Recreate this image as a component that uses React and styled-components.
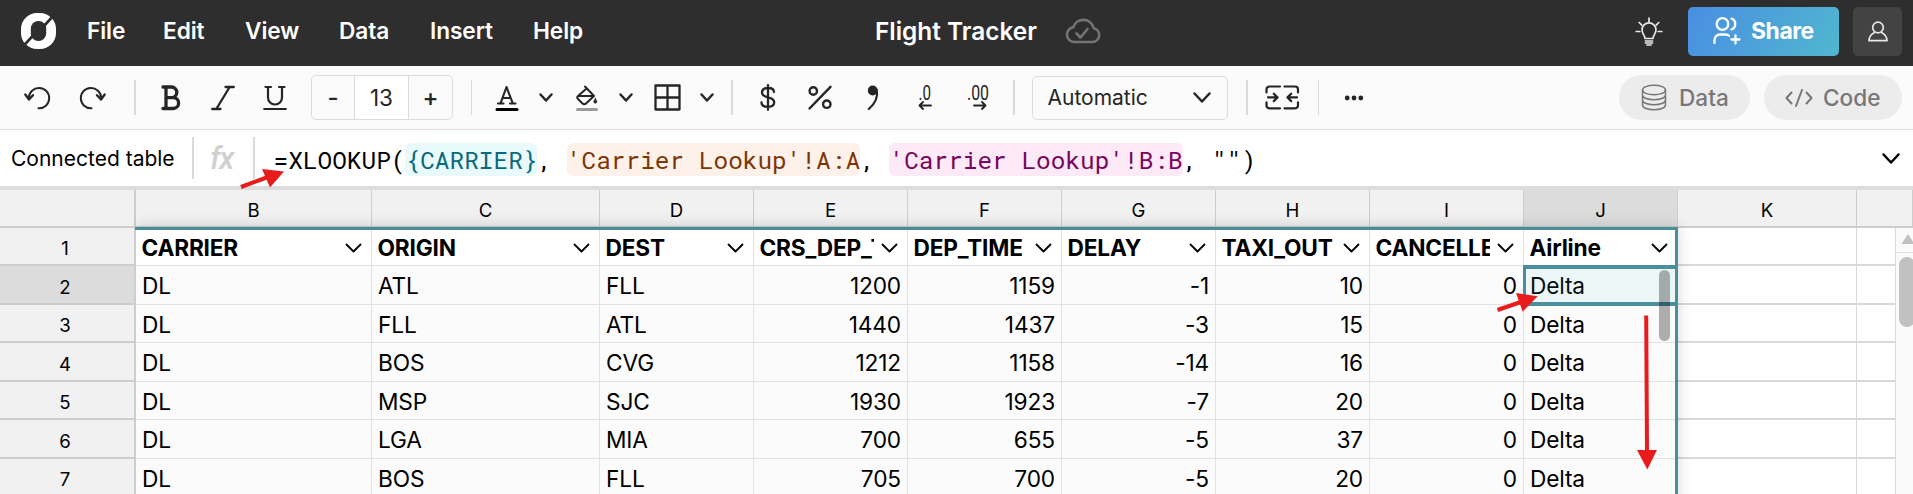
import React, { Fragment, useState } from 'react'
import styled, { createGlobalStyle, css } from 'styled-components'

const GlobalStyle = createGlobalStyle`
  * {
    box-sizing: border-box;
  }
  body {
    margin: 0;
    overflow: hidden;
    background: #fff;
    font-family: Inter, 'Liberation Sans', sans-serif;
  }
  button {
    font: inherit;
    color: inherit;
    border: 0;
    padding: 0;
    background: none;
    cursor: pointer;
  }
`

const teal = '#488f9b'

const Page = styled.div`
  position: relative;
  display: flex;
  flex-direction: column;
  width: 1913px;
  height: 494px;
  overflow: hidden;
`

/* Top bar */
const TopBar = styled.header`
  display: grid;
  grid-template-columns: 875px 1fr auto;
  align-items: center;
  height: 66px;
  flex: none;
  padding-right: 11px;
  background: #2e2e2e;
  color: #fff;
`

const MenuBar = styled.nav`
  display: flex;
  align-items: center;
  padding-left: 20px;
`

const MenuItem = styled.button`
  width: ${({ $width }) => $width}px;
  height: 30px;
  margin-top: -5px;
  text-align: left;
  font-size: 22.7px;
  font-weight: 600;
  letter-spacing: -0.1px;
  white-space: nowrap;
`

const LogoLink = styled.a`
  display: flex;
  width: 67px;
  margin-top: -4px;
`

const FileTitle = styled.div`
  display: flex;
  align-items: center;
  gap: 28px;
  margin-top: -4px;
  font-size: 24.4px;
  font-weight: 600;
`

const Account = styled.div`
  display: flex;
  align-items: center;
  height: 49px;
  margin-top: -3px;
`

const TipsButton = styled.button`
  display: flex;
  margin-right: 25px;
`

const ShareButton = styled.button`
  display: flex;
  align-items: center;
  gap: 10px;
  width: 151px;
  height: 49px;
  padding-left: 25px;
  padding-bottom: 1px;
  margin-right: 14px;
  border-radius: 5px;
  background: linear-gradient(120deg, #4a90e2 5%, #50b5cf 95%);
  font-size: 23px;
  font-weight: 700;
  letter-spacing: -0.5px;
`

const UserButton = styled.button`
  display: flex;
  align-items: center;
  justify-content: center;
  width: 49px;
  height: 49px;
  border-radius: 5px;
  background: #434343;
`

/* Toolbar */
const ToolBar = styled.div`
  display: flex;
  align-items: center;
  height: 64px;
  flex: none;
  padding: 0 11px 0 11.5px;
  border-bottom: 1px solid #dcdcdc;
  background: #fbfbfb;
  color: #252525;
`

const Tool = styled.button`
  display: flex;
  align-items: center;
  justify-content: center;
  flex: none;
  width: ${({ $width = 52 }) => $width}px;
  height: 44px;
`

const Divider = styled.i`
  flex: none;
  width: ${({ $thin }) => ($thin ? 1 : 2)}px;
  height: ${({ $tall }) => ($tall ? 42 : 35)}px;
  margin: 0 ${({ $right = 9 }) => $right}px 0 ${({ $left = 9 }) => $left}px;
  background: #dadada;
`

const Stepper = styled.div`
  display: grid;
  grid-template-columns: 42px 55px 1fr;
  flex: none;
  width: 142px;
  height: 45px;
  margin-left: 9.5px;
  border: 1px solid #dcdcdc;
  border-radius: 5px;
  font-size: 22.5px;
  text-align: center;
`

const StepButton = styled.button`
  font-size: 24px;
  font-weight: 500;
`

const StepValue = styled.span`
  border: solid #dcdcdc;
  border-width: 0 1px;
  background: #fff;
  line-height: 43px;
`

const FormatSelect = styled.button`
  display: flex;
  align-items: center;
  justify-content: space-between;
  flex: none;
  width: 196px;
  height: 44px;
  padding: 0 16px 0 15px;
  border: 1px solid #dcdcdc;
  border-radius: 5px;
  font-size: 21px;
`

const Pills = styled.div`
  display: flex;
  gap: 14px;
  margin-left: auto;
`

const Pill = styled.button`
  display: flex;
  align-items: center;
  width: ${({ $width }) => $width}px;
  height: 45px;
  padding-left: ${({ $pad }) => $pad}px;
  gap: ${({ $gap }) => $gap}px;
  border-radius: 23px;
  background: #ececec;
  color: #777;
  font-size: 22.6px;
  font-weight: 500;
`

/* Formula bar */
const FormulaBar = styled.div`
  display: flex;
  align-items: center;
  flex: none;
  height: 60px;
  padding: 0 13px 0 11px;
  border-bottom: 4px solid #dcdcdc;
  background: #fff;
`

const SourceName = styled.span`
  width: 181px;
  font-size: 21px;
  white-space: nowrap;
`

const FxLabel = styled.span`
  width: 59px;
  padding-right: 4px;
  color: #d0d0d0;
  font-family: Roboto, sans-serif;
  font-size: 31px;
  font-style: italic;
  font-weight: 500;
  letter-spacing: -1.5px;
  text-align: center;
`

const Formula = styled.code`
  flex: 1;
  padding: 2px 0 0 18.5px;
  font-family: 'Roboto Mono', 'DejaVu Sans Mono', monospace;
  font-size: 24.45px;
  line-height: 33px;
  white-space: pre;
`

const tokenColors = {
  field: css`
    color: #0b6a7a;
    background: #e9fafd;
  `,
  first: css`
    color: #7c3606;
    background: #fef1ea;
  `,
  second: css`
    color: #78065c;
    background: #fee9f7;
  `
}

const Token = styled.span`
  display: inline-block;
  border-radius: 6px;
  ${({ $kind }) => tokenColors[$kind]}
`

/* Sheet */
const Sheet = styled.div`
  position: relative;
  display: grid;
  grid-template-columns: 136px 236px 228px 154px 154px 154px 154px 154px 154px 154px 179px 56px;
  grid-template-rows: 38px 38px 39px 38px 39px 38px 39px 38px;
  background: #fff;
`

const HeadCell = styled.div`
  display: flex;
  align-items: center;
  justify-content: center;
  padding-top: 4px;
  border: solid #cdcdcd;
  border-width: 0 ${({ $row }) => ($row ? 2 : 1)}px 2px 0;
  background: ${({ $active }) => ($active ? '#dcdcdc' : '#f1f1f1')};
  font-size: 18.6px;
  ${({ $row }) => $row && 'padding-right: 4px;'}
`

const Cell = styled.div`
  display: flex;
  align-items: center;
  justify-content: ${({ $right }) => ($right ? 'flex-end' : 'flex-start')};
  padding: 1px 6px 0;
  border: solid #e2e2e2;
  border-width: 0 1px 1px 0;
  background: #fbfbfb;
  font-size: 22.7px;
  letter-spacing: -0.15px;
  white-space: nowrap;
`

const FieldCell = styled(Cell)`
  padding: 2px 9px 0 5.5px;
  background: #fff;
  font-weight: 700;
  letter-spacing: -0.2px;
`

const FieldName = styled.span`
  flex: 1;
  overflow: hidden;
  margin-right: 7px;
`

const BlankCell = styled.div`
  border: solid #d9d9d9;
  border-width: 0 1px 2px 0;
`

const TableOutline = styled.div`
  position: absolute;
  top: 37px;
  left: 135px;
  width: 1543px;
  height: 300px;
  border: solid ${teal};
  border-width: 3px 3px 0 0;
  box-shadow: 0 0 14px rgba(0, 0, 0, 0.16);
  clip-path: inset(-20px -20px 0 0);
`

const ActiveCell = styled.div`
  position: absolute;
  top: 75px;
  left: 1523px;
  width: 155px;
  height: 41px;
  border: solid ${teal};
  border-width: 4px 3px;
  background: rgba(72, 190, 210, 0.08);
`

const TableThumb = styled.div`
  position: absolute;
  top: 80px;
  left: 1659px;
  width: 11px;
  height: 71px;
  border-radius: 6px;
  background: rgba(0, 0, 0, 0.31);
`

const ScrollTrack = styled.div`
  position: absolute;
  top: 38px;
  left: 1895px;
  width: 25px;
  height: 280px;
  border-left: 1px solid #dadada;
  background: #fafafa;
`

const ScrollUp = styled.div`
  display: flex;
  justify-content: center;
  padding-top: 6px;
  height: 25px;
  border-bottom: 1px solid #e0e0e0;
`

const ScrollThumb = styled.div`
  width: 16px;
  height: 70px;
  margin: 4px 0 0 3px;
  border-radius: 8px;
  background: #c1c1c1;
`

const Markup = styled.svg`
  position: absolute;
  inset: 0;
  pointer-events: none;
`

const Svg = ({ w, h, sw = 2, children, ...rest }) => (
  <svg
    width={w}
    height={h}
    viewBox={`0 0 ${w} ${h}`}
    fill="none"
    stroke="currentColor"
    strokeWidth={sw}
    strokeLinecap="round"
    strokeLinejoin="round"
    overflow="visible"
    {...rest}
  >
    {children}
  </svg>
)

const Chevron = ({ w = 14, h = 9, sw = 2.5 }) => (
  <Svg w={w} h={h} sw={sw}>
    <path d={`M1.5 1.5L${w / 2} ${h - 1.5}L${w - 1.5} 1.5`} />
  </Svg>
)

const Logo = () => (
  <svg width="36" height="36" viewBox="0 0 36 36">
    <rect x="1" y="0" width="35" height="36" rx="16" fill="#fff" />
    <rect x="10.8" y="8" width="15.400" height="20" rx="7.500" fill="#2e2e2e" />
    <path d="M34 2L23.500 13.500M13 22.500L2.500 34" stroke="#2e2e2e" strokeWidth="2.600" />
  </svg>
)

const CloudIcon = () => (
  <Svg w={36} h={26} sw={2.6} stroke="#747474">
    <path d="M9 24h18.500a7 7 0 0 0 1.300-13.800A10.700 10.700 0 0 0 8.200 9.300A7.400 7.400 0 0 0 9 24z" />
    <path d="M11.500 15.500l4 4 7-8.500" />
  </Svg>
)

const BulbIcon = () => (
  <Svg w={28} h={30} sw={1.7} stroke="#e8e8e8">
    <path d="M10 21.500c0-3-3-4.500-3-8.700a7 7 0 0 1 14 0c0 4.200-3 5.700-3 8.700z" />
    <path d="M10.500 24h7M10.500 26h7M12 28h4" />
    <path d="M14 1v4M1.200 14.500h3.600M23.200 14.500h3.600M4.200 5.500l2.600 2.600M23.800 5.500l-2.600 2.600" />
  </Svg>
)

const ShareIcon = () => (
  <Svg w={28} h={28} sw={2.3}>
    <circle cx="9.500" cy="7" r="5.800" />
    <path d="M18.500 1.600c5 1.300 5 9.500 0 10.800" />
    <path d="M1.500 26v-3a5.500 5.500 0 0 1 5.500-5.500h5.500c1.500 0 2.700.5 3.500 1.300" />
    <path d="M22.500 18.500v8M18.500 22.500h8" />
  </Svg>
)

const UserIcon = () => (
  <Svg w={20} h={21} sw={1.700} stroke="#e8e8e8">
    <circle cx="10" cy="6.500" r="5.300" />
    <path d="M1 19.700c0-5 2.800-7 5.500-8.300M19 19.700c0-5-2.800-7-5.500-8.300M1 19.700h18" />
  </Svg>
)

const UndoIcon = () => (
  <Svg w={27} h={24}>
    <path d="M14.500 22.300A10.200 10.200 0 1 0 4.800 11.800" />
    <path d="M1.300 8.500l3.700 5 4-4.300" strokeWidth="2.300" />
  </Svg>
)

const RedoIcon = () => (
  <Svg w={27} h={24}>
    <path d="M12.500 22.300A10.200 10.200 0 1 1 22.200 11.800" />
    <path d="M25.700 8.500l-3.700 5-4-4.300" strokeWidth="2.300" />
  </Svg>
)

const BoldIcon = () => (
  <Svg w={20} h={26} sw={3.300}>
    <path d="M2 2h8.500a5.300 5.300 0 0 1 0 10.600H5.500M10.500 12.600h1.700a5.400 5.400 0 0 1 0 10.900H2M5 2v21.500" />
  </Svg>
)

const ItalicIcon = () => (
  <Svg w={24} h={26} sw={2.300}>
    <path d="M14.500 2h8.300M1.200 24h8.300M18.700 2L5.300 24" />
  </Svg>
)

const UnderlineIcon = () => (
  <Svg w={24} h={26} sw={2.200}>
    <path d="M2.500 2h5.500M16 2h5.500M5 2v10.500a7 7 0 0 0 14 0V2M1.200 24h21.600" />
  </Svg>
)

const TextColorIcon = () => (
  <Svg w={24} h={26} sw={2.100}>
    <path d="M5.500 18.300L11.500 2l6.300 16.300M7.500 13h8.200M3 18.500h5.500M15 18.500h5.500" />
    <path d="M2 24.500h20" stroke="#000" strokeWidth="3" />
  </Svg>
)

const FillIcon = () => (
  <Svg w={22} h={26} sw={2}>
    <path d="M9 1.500l9 9.500-8 7.500c-1 1-2.500 1-3.500 0L2 14c-1-1-1-2 0-3l8-7M2 11h16" />
    <path d="M19.300 13.500c-1 1.700-1.500 2.300-1.500 3.200a1.500 1.500 0 0 0 3 0c0-.9-.5-1.500-1.500-3.200z" fill="currentColor" strokeWidth=".6" />
    <path d="M1.500 24.500h19" stroke="#9b9b9b" strokeWidth="3" />
  </Svg>
)

const BordersIcon = () => (
  <Svg w={27} h={27} sw={2.300}>
    <path d="M1.500 1.500h24v24h-24zM13.500 1.500v24M1.500 13.500h24" />
  </Svg>
)

const DollarIcon = () => (
  <Svg w={16} h={27} sw={2.300}>
    <path d="M14 8c0-2.800-2.500-4-6-4S2 5.600 2 8.500s2.600 4 6 4.800 6.200 2 6.200 5-2.600 4.500-6.200 4.500-6.500-1.500-6.500-4.300M8 1.200v24.600" />
  </Svg>
)

const PercentIcon = () => (
  <Svg w={24} h={25} sw={2.400}>
    <circle cx="5.300" cy="6" r="3.700" />
    <circle cx="18.800" cy="19.200" r="3.700" />
    <path d="M22.500 1.800L1.500 23.500" />
  </Svg>
)

const CommaIcon = () => (
  <Svg w={12} h={26} sw={2.200}>
    <circle cx="5.700" cy="5.500" r="3.800" fill="currentColor" />
    <path d="M9.800 5c1.500 8-2.800 14.500-8 19" />
  </Svg>
)

const DecimalIcon = ({ more }) => (
  <Svg w={24} h={28} sw={1.900}>
    <text
      x={more ? 1 : 5.500}
      y="16"
      textLength={more ? 22 : 12.500}
      lengthAdjust="spacingAndGlyphs"
      fontFamily="Roboto"
      fontSize="20"
      fill="currentColor"
      stroke="none"
    >
      {more ? '.00' : '.0'}
    </text>
    {more ? (
      <path d="M8 21.500h11.500M16 18l3.500 3.500-3.500 3.500" />
    ) : (
      <path d="M18 21.500H6.500M10 18l-3.500 3.500 3.500 3.500" />
    )}
  </Svg>
)

const MergeIcon = () => (
  <Svg w={34} h={25} sw={2.200}>
    <path d="M15 1.500H4.500a3 3 0 0 0-3 3v3M19.500 1.500H30a3 3 0 0 1 3 3v3M15 23.300H4.500a3 3 0 0 1-3-3v-3M19.500 23.300H30a3 3 0 0 0 3-3v-3" />
    <path d="M3 12.400h9M8.800 8.700l3.700 3.700-3.700 3.700M32 12.400h-9M26.200 8.700l-3.700 3.700 3.700 3.700" />
  </Svg>
)

const MoreIcon = () => (
  <Svg w={20} h={6} stroke="none" fill="currentColor">
    <circle cx="3.200" cy="3" r="2.400" />
    <circle cx="10" cy="3" r="2.400" />
    <circle cx="16.800" cy="3" r="2.400" />
  </Svg>
)

const DatabaseIcon = () => (
  <Svg w={26} h={27} sw={1.500}>
    <ellipse cx="13" cy="6" rx="11.500" ry="4.800" />
    <path d="M1.500 6v15c0 6.300 23 6.300 23 0V6M1.500 11c0 6.300 23 6.300 23 0M1.500 16c0 6.300 23 6.300 23 0" />
  </Svg>
)

const CodeIcon = () => (
  <Svg w={28} h={18} sw={2}>
    <path d="M6.500 3.500L1.500 9l5 5.500M21.500 3.500l5 5.500-5 5.500M17 1l-6 16" />
  </Svg>
)

const menus = [
  ['File', 76],
  ['Edit', 82],
  ['View', 94],
  ['Data', 91],
  ['Insert', 103],
  ['Help', 60]
]

const columns = ['B', 'C', 'D', 'E', 'F', 'G', 'H', 'I', 'J', 'K', '']

const fields = [
  'CARRIER',
  'ORIGIN',
  'DEST',
  'CRS_DEP_TIME',
  'DEP_TIME',
  'DELAY',
  'TAXI_OUT',
  'CANCELLED',
  'Airline'
]

const flights = [
  ['DL', 'ATL', 'FLL', 1200, 1159, -1, 10, 0, 'Delta'],
  ['DL', 'FLL', 'ATL', 1440, 1437, -3, 15, 0, 'Delta'],
  ['DL', 'BOS', 'CVG', 1212, 1158, -14, 16, 0, 'Delta'],
  ['DL', 'MSP', 'SJC', 1930, 1923, -7, 20, 0, 'Delta'],
  ['DL', 'LGA', 'MIA', 700, 655, -5, 37, 0, 'Delta'],
  ['DL', 'BOS', 'FLL', 705, 700, -5, 20, 0, 'Delta']
]

const Header = () => (
  <TopBar>
    <MenuBar>
      <LogoLink>
        <Logo />
      </LogoLink>
      {menus.map(([name, width]) => (
        <MenuItem key={name} $width={width}>
          {name}
        </MenuItem>
      ))}
    </MenuBar>
    <FileTitle>
      Flight Tracker
      <CloudIcon />
    </FileTitle>
    <Account>
      <TipsButton>
        <BulbIcon />
      </TipsButton>
      <ShareButton>
        <ShareIcon />
        Share
      </ShareButton>
      <UserButton>
        <UserIcon />
      </UserButton>
    </Account>
  </TopBar>
)

const Tools = () => {
  const [size, setSize] = useState(13)

  return (
    <ToolBar>
      <Tool $width={51}><UndoIcon /></Tool>
      <Tool $width={59}><RedoIcon /></Tool>
      <Divider $left={12.5} />
      <Tool><BoldIcon /></Tool>
      <Tool><ItalicIcon /></Tool>
      <Tool $width={52.5}><UnderlineIcon /></Tool>
      <Stepper>
        <StepButton onClick={() => setSize(size - 1)}>-</StepButton>
        <StepValue>{size}</StepValue>
        <StepButton onClick={() => setSize(size + 1)}>+</StepButton>
      </Stepper>
      <Divider $thin $left={18} $right={12.5} />
      <Tool $width={44}><TextColorIcon /></Tool>
      <Tool $width={34}><Chevron /></Tool>
      <Tool $width={48}><FillIcon /></Tool>
      <Tool $width={30}><Chevron /></Tool>
      <Tool $width={53}><BordersIcon /></Tool>
      <Tool $width={26}><Chevron /></Tool>
      <Divider $left={11.5} $right={8.5} />
      <Tool $width={52.5}><DollarIcon /></Tool>
      <Tool $width={52.5}><PercentIcon /></Tool>
      <Tool $width={52.5}><CommaIcon /></Tool>
      <Tool $width={52.5}><DecimalIcon /></Tool>
      <Tool $width={52.5}><DecimalIcon more /></Tool>
      <Divider $left={8.5} $right={17} />
      <FormatSelect>
        Automatic
        <Chevron w={18} h={11} />
      </FormatSelect>
      <Divider $left={18} $right={0} />
      <Tool $width={69}><MergeIcon /></Tool>
      <Divider $thin $left={1} $right={5} />
      <Tool $width={60}><MoreIcon /></Tool>
      <Pills>
        <Pill $width={131} $pad={22} $gap={12}>
          <DatabaseIcon />
          Data
        </Pill>
        <Pill $width={138} $pad={21} $gap={10}>
          <CodeIcon />
          Code
        </Pill>
      </Pills>
    </ToolBar>
  )
}

const FormulaInput = () => (
  <FormulaBar>
    <SourceName>Connected table</SourceName>
    <Divider $tall $left={0} $right={0} />
    <FxLabel>fx</FxLabel>
    <Divider $tall $left={0} $right={0} />
    <Formula>
      =XLOOKUP(<Token $kind="field">{'{CARRIER}'}</Token>
      {', '}
      <Token $kind="first">{"'Carrier Lookup'!A:A"}</Token>
      {', '}
      <Token $kind="second">{"'Carrier Lookup'!B:B"}</Token>
      {', "")'}
    </Formula>
    <Chevron w={18} h={11} />
  </FormulaBar>
)

const FlightSheet = () => (
  <Sheet>
    <HeadCell $row />
    {columns.map((name) => (
      <HeadCell key={name} $active={name === 'J'}>
        {name}
      </HeadCell>
    ))}

    {/* Field names */}
    <HeadCell $row>1</HeadCell>
    {fields.map((name) => (
      <FieldCell key={name}>
        <FieldName>{name}</FieldName>
        <Chevron w={17} h={10} sw={1.800} />
      </FieldCell>
    ))}
    <BlankCell />
    <BlankCell />

    {/* Rows */}
    {flights.map((flight, i) => (
      <Fragment key={i}>
        <HeadCell $row $active={i === 0}>
          {i + 2}
        </HeadCell>
        {flight.map((value, j) => (
          <Cell key={j} $right={typeof value === 'number'}>
            {value}
          </Cell>
        ))}
        <BlankCell />
        <BlankCell />
      </Fragment>
    ))}

    <TableOutline />
    <ActiveCell />
    <TableThumb />
    <ScrollTrack>
      <ScrollUp>
        <svg width="14" height="10">
          <path d="M7 0l6.500 10H.5z" fill="#c1c1c1" />
        </svg>
      </ScrollUp>
      <ScrollThumb />
    </ScrollTrack>
  </Sheet>
)

const App = () => (
  <Page>
    <GlobalStyle />
    <Header />
    <Tools />
    <FormulaInput />
    <FlightSheet />
    <Markup width="1913" height="494" fill="#e81c1c" stroke="#e81c1c">
      <path d="M241 187L268 177" strokeWidth="4" />
      <path d="M284 171.500L262 169L270 187.500z" stroke="none" />
      <path d="M1497.500 310L1521 302" strokeWidth="4" />
      <path d="M1537.700 296.300L1516 293L1522.700 311.700z" stroke="none" />
      <path d="M1646.200 315.500L1647 452" strokeWidth="4" />
      <path d="M1647.300 469.500L1637 450H1657z" stroke="none" />
    </Markup>
  </Page>
)

export default App
